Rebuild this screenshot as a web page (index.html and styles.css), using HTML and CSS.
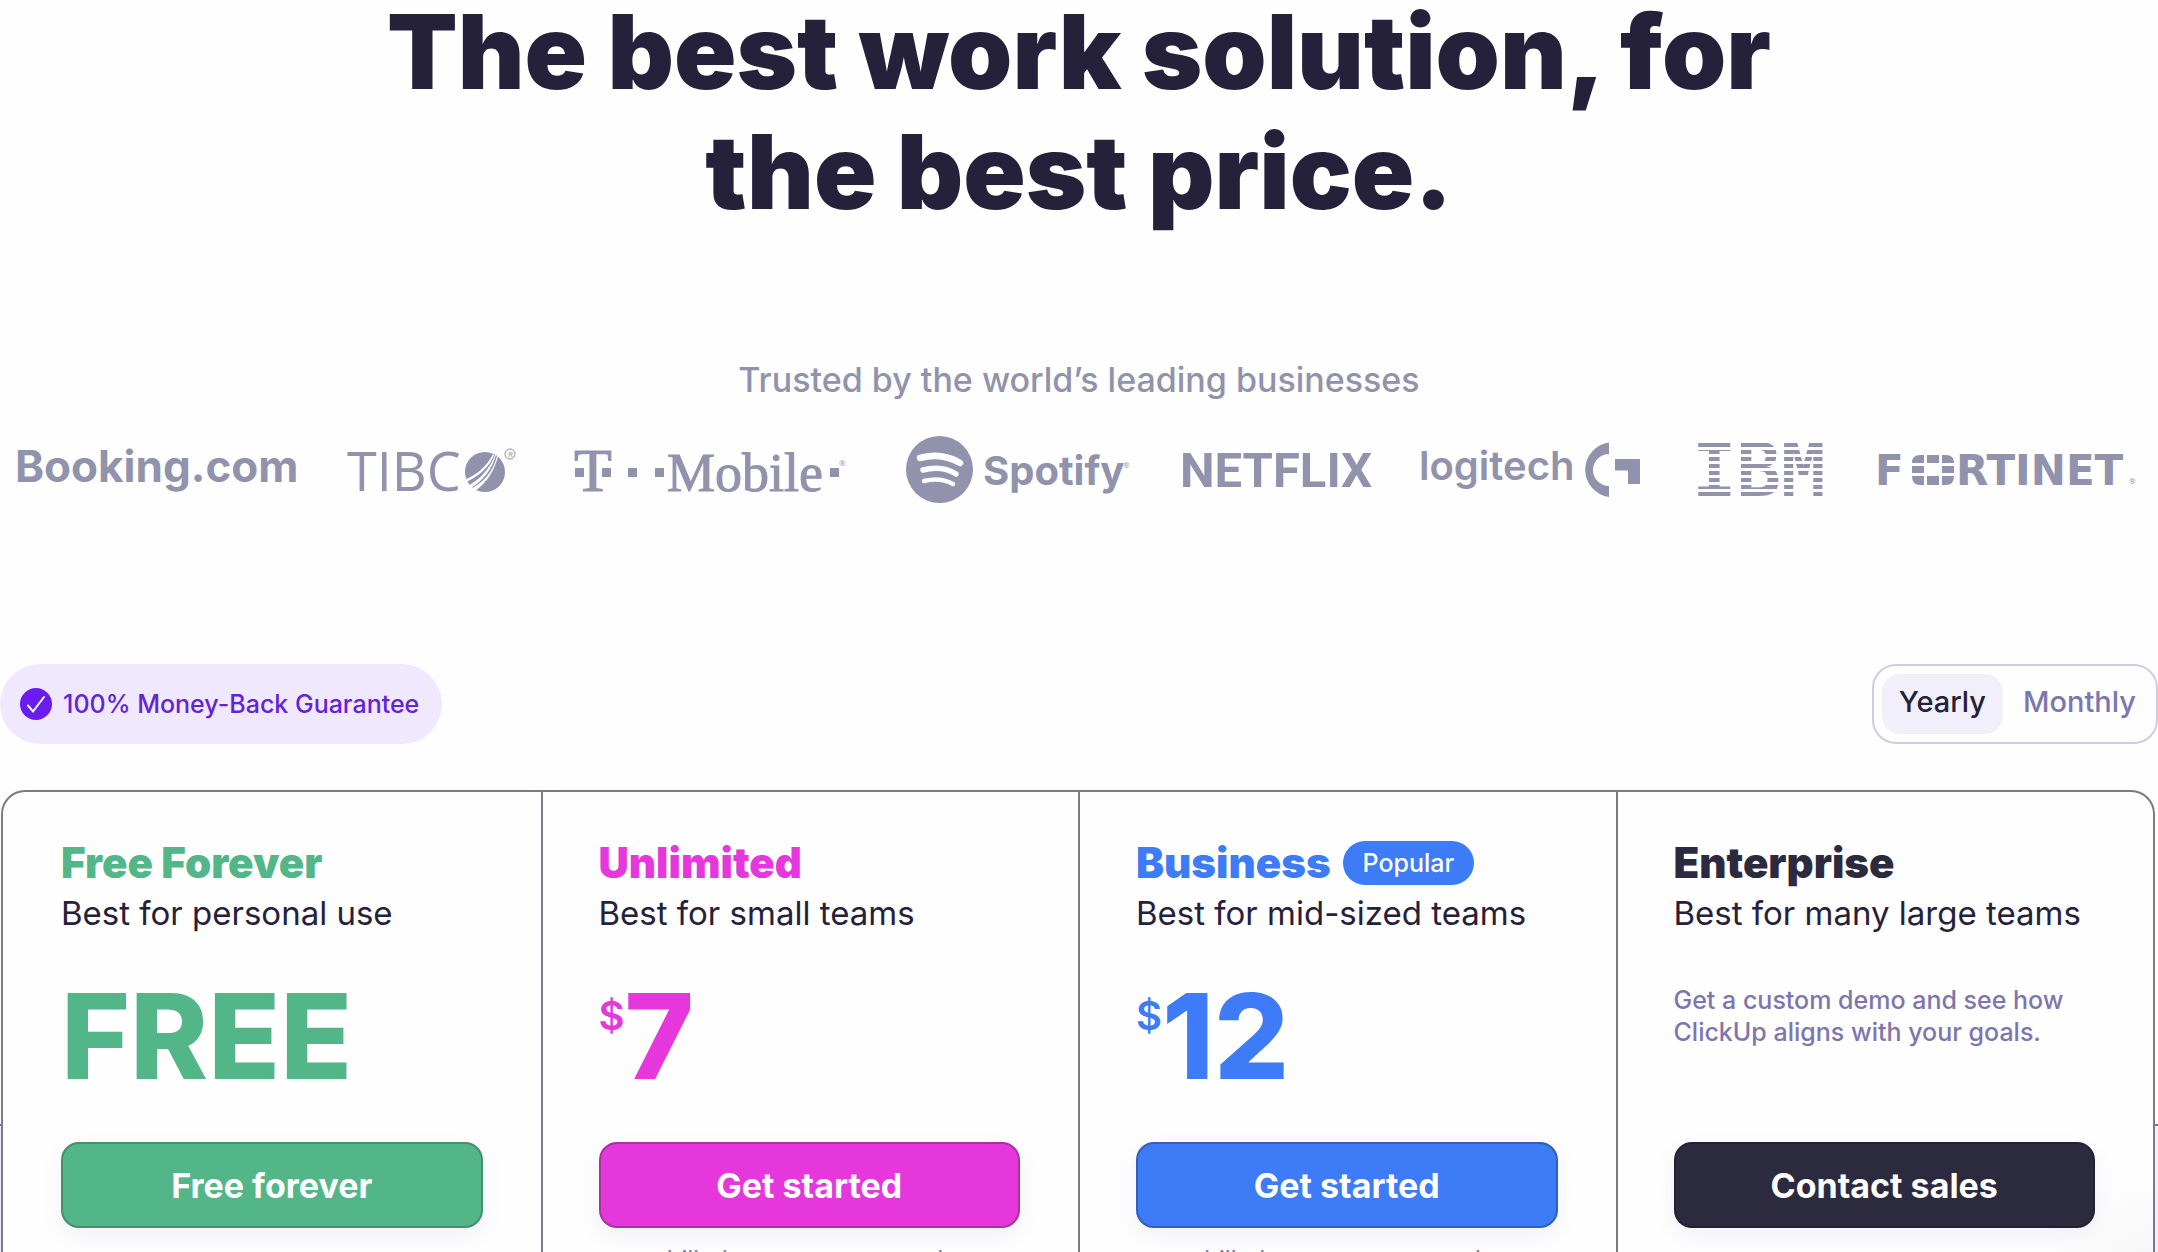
FILE: index.html
```html
<!DOCTYPE html>
<html lang="en">
<head>
<meta charset="utf-8">
<meta name="viewport" content="width=device-width, initial-scale=1">
<title>Pricing</title>
<link rel="stylesheet" href="styles.css">
</head>
<body>
<main class="page">
  <h1 class="headline">The best work solution, for<br>the best price.</h1>

  <section class="trusted">
    <h2 class="trusted-title">Trusted by the world’s leading businesses</h2>
    <ul class="logos">
      <li><svg class="logo" width="277" height="80" viewBox="0 0 277 80" role="img" aria-label="Booking.com">
        <text class="logo-sans" x="-3" y="52" font-size="44">Booking.com</text>
      </svg></li>
      <li><svg class="logo" width="175" height="80" viewBox="0 0 175 80" role="img" aria-label="TIBCO">
        <text class="logo-thin" x="0" y="61" font-size="54">TIBC</text>
        <circle cx="138" cy="42" r="20"/>
        <path class="cut" d="M146 24Q137 42 117 50L117 53Q140 43 147 25ZM148 25Q140 46 119 57L122 59Q142 48 149 25ZM150 26Q144 50 121 60L124 66L128 61Q146 48 151 26Z"/>
        <circle class="outline" cx="163" cy="24" r="5"/>
        <text class="logo-thin" x="161" y="27" font-size="8">R</text>
      </svg></li>
      <li><svg class="logo" width="280" height="80" viewBox="0 0 280 80" role="img" aria-label="T-Mobile">
        <text class="logo-serif" x="0" y="61" font-size="62">T</text>
        <path d="M1 38h9v9h-9zM28 38h9v9h-9zM54 38h9v9h-9zM81 38h9v9h-9zM256 38h9v9h-9z"/>
        <text class="logo-serif" x="93" y="61" font-size="54">Mobile</text>
        <text class="logo-thin" x="265" y="36" font-size="8">®</text>
      </svg></li>
      <li><svg class="logo" width="225" height="80" viewBox="0 0 225 80" role="img" aria-label="Spotify">
        <circle cx="33.500" cy="39.500" r="33.500"/>
        <path class="wave" stroke-width="6.500" d="M14 28Q36 22 54 33"/>
        <path class="wave" stroke-width="5.500" d="M17 40Q36 35 50 44"/>
        <path class="wave" stroke-width="4.500" d="M18 51Q34 47 47 54"/>
        <text class="logo-sans" x="77" y="55" font-size="40">Spotify</text>
        <text class="logo-thin" x="217" y="38" font-size="8">®</text>
      </svg></li>
      <li><svg class="logo" width="186" height="80" viewBox="0 0 186 80" role="img" aria-label="Netflix">
        <text class="logo-narrow" x="-3" y="57" font-size="49">NETFLIX</text>
      </svg></li>
      <li><svg class="logo" width="219" height="80" viewBox="0 0 219 80" role="img" aria-label="logitech G">
        <text class="logo-medium" x="-2" y="50" font-size="40">logitech</text>
        <path d="M188 12.500A27.500 27.500 0 0 0 188 67V56A16 16 0 0 1 188 24ZM194 29h25v25h-12v-13.500h-13z"/>
      </svg></li>
      <li><span class="ibm">IBM</span></li>
      <li><svg class="logo" width="260" height="80" viewBox="0 0 260 80" role="img" aria-label="Fortinet">
        <text class="logo-wide" x="-2" y="55" font-size="42">F</text>
        <path d="M43 25h4v8H35q0-8 8-8zM50 25h12v8H50zM65 25h4q8 0 8 8H65zM35 36h12v7H35zM65 36h12v7H65zM35 46h12v9h-4q-8 0-8-9zM50 46h12v9H50zM65 46h12q0 9-8 9h-4z"/>
        <text class="logo-wide" x="79" y="55" font-size="42">RTINET</text>
        <text class="logo-thin" x="252" y="54" font-size="8">®</text>
      </svg></li>
    </ul>
  </section>

  <div class="toolbar">
    <p class="guarantee">
      <svg width="32" height="32" viewBox="0 0 32 32" aria-hidden="true"><circle cx="16" cy="16" r="16"/><path d="M8 17.500l5 6L24 9"/></svg>
      100% Money-Back Guarantee
    </p>
    <fieldset class="billing">
      <legend class="hidden">Billing period</legend>
      <input class="hidden" type="radio" name="billing" id="yearly" checked>
      <label for="yearly">Yearly</label>
      <input class="hidden" type="radio" name="billing" id="monthly">
      <label for="monthly">Monthly</label>
    </fieldset>
  </div>

  <section class="plans-band">
    <div class="plans">
      <article class="plan plan-free">
        <h3 class="plan-name">Free Forever</h3>
        <p class="plan-for">Best for personal use</p>
        <div class="plan-price"><span class="amount">FREE</span></div>
        <button class="plan-button" type="button">Free forever</button>
      </article>
      <article class="plan plan-unlimited">
        <h3 class="plan-name">Unlimited</h3>
        <p class="plan-for">Best for small teams</p>
        <div class="plan-price"><span class="currency">$</span><span class="amount">7</span></div>
        <button class="plan-button" type="button">Get started</button>
        <p class="plan-note">billed per user per month</p>
      </article>
      <article class="plan plan-business">
        <h3 class="plan-name">Business <span class="badge">Popular</span></h3>
        <p class="plan-for">Best for mid-sized teams</p>
        <div class="plan-price"><span class="currency">$</span><span class="amount">12</span></div>
        <button class="plan-button" type="button">Get started</button>
        <p class="plan-note">billed per user per month</p>
      </article>
      <article class="plan plan-enterprise">
        <h3 class="plan-name">Enterprise</h3>
        <p class="plan-for">Best for many large teams</p>
        <div class="plan-price"><p class="custom">Get a custom demo and see how<br>ClickUp aligns with your goals.</p></div>
        <button class="plan-button" type="button">Contact sales</button>
      </article>
    </div>
  </section>
</main>
</body>
</html>
```
FILE: styles.css
```css
* { box-sizing: border-box; }

body {
  margin: 0;
  background: #fefefe;
  color: #25213b;
  font-family: Inter, "Open Sans", sans-serif;
}

h1, h2, h3, p, ul, fieldset { margin: 0; padding: 0; }

.page {
  display: flex;
  flex-direction: column;
  height: 100vh;
  overflow: hidden;
}

.hidden {
  position: absolute;
  width: 1px;
  height: 1px;
  opacity: 0;
}

/* Headline */
.headline {
  margin-top: -8px;
  font-size: 103px;
  font-weight: 900;
  line-height: 120px;
  text-align: center;
}

/* Customer logos */
.trusted { margin-top: 126px; }

.trusted-title {
  color: #9093ab;
  font-size: 34px;
  font-weight: 500;
  line-height: 44px;
  text-align: center;
}

.logos {
  display: flex;
  align-items: center;
  justify-content: space-between;
  margin-top: 28px;
  padding: 0 21px 0 18px;
  list-style: none;
}

.logos li { display: flex; }

.logo {
  overflow: visible;
  fill: #9093ab;
}

.logo .cut { fill: #fefefe; }
.logo .outline { fill: none; stroke: #9093ab; }
.logo .wave { fill: none; stroke: #fefefe; stroke-linecap: round; }

.logo-sans { font-family: Inter, sans-serif; font-weight: 700; }
.logo-medium { font-family: Inter, sans-serif; font-weight: 600; }
.logo-thin { font-family: "Open Sans", sans-serif; font-weight: 400; }
.logo-serif { font-family: "Liberation Serif", serif; font-weight: 400; stroke: #9093ab; }
.logo-narrow { font-family: Roboto, sans-serif; font-weight: 700; }
.logo-wide { font-family: "DejaVu Sans", sans-serif; font-weight: 700; }

.ibm {
  width: 133px;
  background: repeating-linear-gradient(#9093ab 0 3px, transparent 3px 6px, #9093ab 6px 7px);
  background-clip: text;
  color: transparent;
  font-family: "DejaVu Sans Mono", monospace;
  font-size: 74px;
  font-weight: 700;
  line-height: 80px;
}

/* Guarantee and billing switch */
.toolbar {
  display: flex;
  align-items: center;
  justify-content: space-between;
  margin-top: 154px;
}

.guarantee {
  display: flex;
  align-items: center;
  gap: 11px;
  height: 80px;
  padding: 0 23px 0 20px;
  border-radius: 40px;
  background: #f0e8ff;
  color: #6323d8;
  font-size: 25px;
  font-weight: 500;
}

.guarantee circle { fill: #6a1bf0; }
.guarantee path {
  fill: none;
  stroke: #fff;
  stroke-width: 2;
  stroke-linecap: round;
}

.billing {
  display: flex;
  padding: 8px;
  border: 2px solid #cfcbe4;
  border-radius: 24px;
}

.billing label {
  padding: 0 12px 4px 20px;
  border-radius: 18px;
  color: #7d76ae;
  font-size: 29px;
  font-weight: 500;
  line-height: 56px;
  cursor: pointer;
}

.billing input:checked + label {
  padding: 0 17px 4px;
  background: #f1f0fa;
  color: #25213b;
}

/* Plans */
.plans-band {
  display: flex;
  flex: 1;
  margin-top: 46px;
  padding: 0 3px 0 1px;
  background: linear-gradient(transparent 334px, #77758d 334px 336px, #f0eefb 336px);
}

.plans {
  display: grid;
  flex: 1;
  grid-template-columns: repeat(4, 1fr);
  border: 2px solid #7b798c;
  border-bottom: 0;
  border-radius: 24px 24px 0 0;
  background: #fefefe;
}

.plan {
  padding: 46px 58px 0;
  --plan-color: #2c2a3e;
  --plan-edge: #232132;
}

.plan + .plan {
  padding-left: 56px;
  border-left: 2px solid #7b798c;
}

.plan-free { --plan-color: #53b689; --plan-edge: #43906d; }
.plan-unlimited { --plan-color: #e637dc; --plan-edge: #a8339f; }
.plan-business { --plan-color: #3e7bf6; --plan-edge: #315fba; }
.plan-enterprise {
  background: radial-gradient(circle at 100% 100%, #f5f5f6, transparent 110px);
}

.plan-name {
  display: flex;
  align-items: center;
  gap: 12px;
  color: var(--plan-color);
  font-size: 42px;
  font-weight: 900;
  line-height: 50px;
}

.badge {
  padding: 0 20px;
  border-radius: 22px;
  background: var(--plan-color);
  color: #fff;
  font-size: 25px;
  font-weight: 500;
  line-height: 44px;
}

.plan-for {
  font-size: 33px;
  font-weight: 400;
  line-height: 50px;
  white-space: nowrap;
}

.plan-price {
  display: flex;
  align-items: flex-start;
  height: 158px;
  margin-top: 46px;
  color: var(--plan-color);
}

.currency {
  font-size: 40px;
  font-weight: 600;
  line-height: 64px;
}

.amount {
  font-size: 118px;
  font-weight: 800;
  line-height: 104px;
}

.custom {
  color: #7d76ae;
  font-size: 25px;
  font-weight: 500;
  line-height: 32px;
  white-space: nowrap;
}

.plan-button {
  display: block;
  width: 100%;
  height: 86px;
  border: 2px solid var(--plan-edge);
  border-radius: 18px;
  background: var(--plan-color);
  box-shadow: 0 8px 20px rgba(90, 80, 160, 0.08);
  color: #fff;
  font-family: inherit;
  font-size: 34px;
  font-weight: 700;
  cursor: pointer;
}

.plan-note {
  margin-top: 16px;
  color: #7d76ae;
  font-size: 24px;
  line-height: 32px;
  text-align: center;
}
```
